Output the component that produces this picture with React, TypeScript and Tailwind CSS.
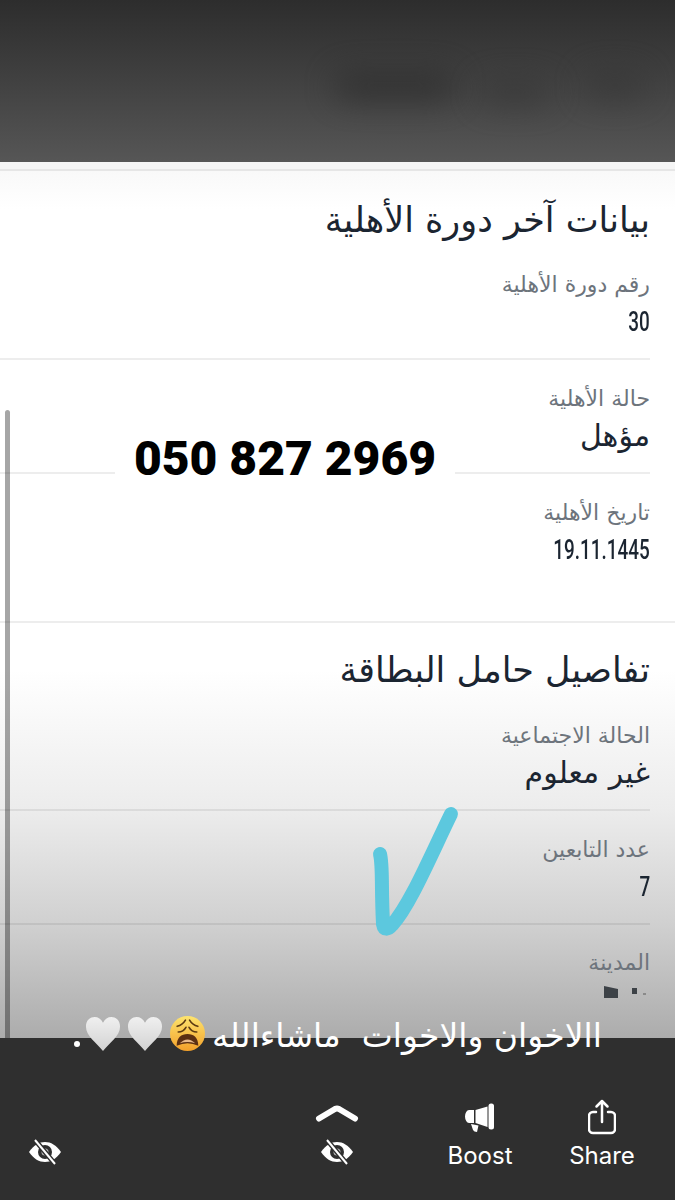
import type { ReactNode } from "react";

const arabic = "font-['DejaVu_Sans',sans-serif]";

const EyeOff = () => (
  <svg width="34" height="26" viewBox="0 0 34 26">
    <path d="M1 13C6 6 11 3 17 3s11 3 16 10c-5 7-10 10-16 10S6 20 1 13Z" fill="#fff" />
    <circle cx="17" cy="13" r="7" fill="#2f2f2f" />
    <circle cx="17" cy="13" r="3.500" fill="#bdbdbd" />
    <path d="M7 1l20 24" stroke="#2f2f2f" strokeWidth="5" />
    <path d="M7 1l20 24" stroke="#fff" strokeWidth="2" />
  </svg>
);

const Megaphone = () => (
  <svg width="30" height="30" viewBox="0 0 30 30" fill="#fff">
    <rect x="23.500" y="0.500" width="5.500" height="26" rx="2.500" />
    <path d="M22.500 3.500v20.500L10.500 20V7Z" />
    <path d="M9 7v13H4a4 6.500 0 0 1 0-13Z" />
    <path d="M6 21l7.500 1.500L12 29q-3 0-4-2Z" />
  </svg>
);

const ShareIcon = () => (
  <svg width="28" height="36" viewBox="0 0 28 36" fill="none" stroke="#fff" strokeWidth="2.500" strokeLinecap="round" strokeLinejoin="round">
    <path d="M8 13H5a4 4 0 0 0-4 4v13a4 4 0 0 0 4 4h18a4 4 0 0 0 4-4V17a4 4 0 0 0-4-4h-3" />
    <path d="M14 23V2M8.500 7.500L14 2l5.500 5.500" />
  </svg>
);

const Heart = ({ id }: { id: string }) => (
  <svg width="36" height="36" viewBox="0 0 38 38">
    <defs>
      <linearGradient id={id} x1="0" y1="0" x2="0" y2="1">
        <stop offset="0" stopColor="#f0f0f0" />
        <stop offset="1" stopColor="#d2d2d2" />
      </linearGradient>
    </defs>
    <path d="M19 37C12 28 1 21 1 11 1 4 6 1 10 1c4 0 7 2 9 6 2-4 5-6 9-6 4 0 9 3 9 10 0 10-11 17-18 26Z" fill={`url(#${id})`} />
  </svg>
);

const WearyFace = () => (
  <svg width="35" height="35" viewBox="0 0 34 34">
    <defs>
      <linearGradient id="face" x1="0" y1="0" x2="0" y2="1">
        <stop offset="0" stopColor="#fde46e" />
        <stop offset="1" stopColor="#f2a02a" />
      </linearGradient>
    </defs>
    <circle cx="17" cy="17" r="17" fill="url(#face)" />
    <path d="M7 10q5-1 8-6M27 10q-5-1-8-6M8 15.500q5 0 7.500-4.500M26 15.500q-5 0-7.500-4.500" stroke="#5b3a12" strokeWidth="1.600" strokeLinecap="round" fill="none" />
    <path d="M6.500 29C6.500 21 11 17.500 17 17.500S27.500 21 27.500 29Q17 24 6.500 29Z" fill="#5b2f12" />
    <path d="M9.500 26.500Q17 19 24.500 26.500 17 24 9.500 26.500Z" fill="#e8b98a" />
  </svg>
);

const Row = ({ label, value, border = true, valueClass }: { label: string; value: ReactNode; border?: boolean; valueClass: string }) => (
  <div className={`flex flex-col items-end pt-[25px] ${border ? "h-[114px] border-b-2 border-black/[0.07]" : ""}`}>
    <div dir="rtl" className={`${arabic} text-[#6d747c] text-[22px] leading-[28px]`}>{label}</div>
    <div className={`text-[#1b2531] h-[46px] leading-[46px] ${valueClass}`}>{value}</div>
  </div>
);

export default function App() {
  const num = "font-['Roboto',sans-serif] font-medium text-[27px] scale-x-[0.7] origin-right";
  const word = `${arabic} text-[30px]`;

  return (
    <div className="relative w-[675px] h-[1200px] overflow-hidden flex flex-col bg-white">
      <header className="relative h-[162px] shrink-0 overflow-hidden bg-gradient-to-b from-[#2d2d2d] to-[#565656]">
        <div className="absolute left-[335px] top-[74px] w-[120px] h-[24px] rounded-full bg-[#2a2a2a] opacity-80 blur-lg" />
        <div className="absolute left-[480px] top-[82px] w-[70px] h-[20px] rounded-full bg-[#333] opacity-70 blur-lg" />
        <div className="absolute left-[585px] top-[74px] w-[60px] h-[22px] rounded-full bg-[#333] opacity-70 blur-lg" />
      </header>

      <main className="relative flex-1 flex flex-col bg-[linear-gradient(#fff_0%,#fff_58%,#ececec_74%,#d0d0d0_87%,#acacac_100%)]">
        <div className="h-[9px] shrink-0 bg-[#f5f5f5] border-b-2 border-[#e6e6e6]" />
        <div className="h-[38px] -mb-[38px] bg-gradient-to-b from-[#f9f9f9] to-white" />

        <section className="pr-[25px] relative">
          <h2 dir="rtl" className={`${arabic} h-[75px] pt-[31px] text-[#1b2531] text-[35px] leading-[36px]`}>بيانات آخر دورة الأهلية</h2>
          <Row label="رقم دورة الأهلية" value="30" valueClass={num} />
          <Row label="حالة الأهلية" value="مؤهل" valueClass={word} />
          <div className="h-[147px]">
            <Row label="تاريخ الأهلية" value="19.11.1445" border={false} valueClass={num} />
          </div>
        </section>

        <section className="pr-[25px] relative border-t-2 border-black/[0.07]">
          <h2 dir="rtl" className={`${arabic} h-[74px] pt-[29px] text-[#1b2531] text-[35px] leading-[36px]`}>تفاصيل حامل البطاقة</h2>
          <Row label="الحالة الاجتماعية" value="غير معلوم" valueClass={word} />
          <Row label="عدد التابعين" value="7" valueClass={num} />
          <div className="flex flex-col items-end pt-[24px]">
            <div dir="rtl" className={`${arabic} text-[#6d747c] text-[22px] leading-[28px]`}>المدينة</div>
            <div className="flex items-start gap-[14px] mt-[9px] h-[20px]">
              <div className="w-[14px] h-[12px] bg-[#3d4247] [clip-path:polygon(0_0,100%_25%,100%_100%,0_100%)]" />
              <div className="w-[18px] h-[10px] flex items-center gap-[6px]">
                <span className="w-[5px] h-[6px] bg-[#3d4247]" />
                <span className="w-[3px] h-[2px] bg-[#8a8a8a] mt-[5px]" />
              </div>
            </div>
          </div>
        </section>

        <div className="absolute left-[5px] top-[248px] bottom-0 w-[5px] rounded-t-full bg-black/35" />
        <div className="absolute left-[115px] top-[272px] w-[340px] h-[50px] bg-white flex items-center justify-center">
          <span className="font-['Roboto',sans-serif] font-black text-[48px] leading-none text-black whitespace-nowrap">050 827 2969</span>
        </div>
        <svg className="absolute left-[365px] top-[640px]" width="100" height="140" viewBox="0 0 100 140" fill="none">
          <path d="M15 52c3 12 1 30 3 70 1 6 5 6 9 1 18-20 38-68 59-111" stroke="#5cc8de" strokeWidth="14" strokeLinecap="round" strokeLinejoin="round" />
        </svg>
      </main>

      <footer className="h-[162px] shrink-0 bg-[#2f2f2f] flex items-end pb-[29px] font-['Inter',sans-serif] text-white">
        <div className="ml-[28px] mb-[6px]"><EyeOff /></div>
        <div className="ml-[254px] w-[42px] flex flex-col items-center mb-[6px]">
          <svg width="44" height="18" viewBox="0 0 44 18" fill="none" className="mb-[17px]">
            <path d="M4 14.500L20 5q2-1 4 0l16 9.500" stroke="#fff" strokeWidth="6" strokeLinecap="round" strokeLinejoin="round" />
          </svg>
          <EyeOff />
        </div>
        <div className="ml-[87px] w-[70px] flex flex-col items-center">
          <Megaphone />
          <span className="text-[24px] leading-[30px] mt-[8px]">Boost</span>
        </div>
        <div className="ml-[52px] w-[70px] flex flex-col items-center">
          <ShareIcon />
          <span className="text-[24px] leading-[30px] mt-[6px]">Share</span>
        </div>
      </footer>

      <div className="absolute left-[74px] top-[1016px] flex items-start text-white">
        <span className="w-[6px] h-[6px] rounded-full bg-white mt-[25px]" />
        <span className="ml-[5px]"><Heart id="heartA" /></span>
        <span className="ml-[6px]"><Heart id="heartB" /></span>
        <span className="ml-[7px]"><WearyFace /></span>
        <span dir="rtl" className={`${arabic} text-[33px] leading-[40px] ml-[7px] whitespace-pre`}>االاخوان والاخوات  ماشاءالله</span>
      </div>
    </div>
  );
}
